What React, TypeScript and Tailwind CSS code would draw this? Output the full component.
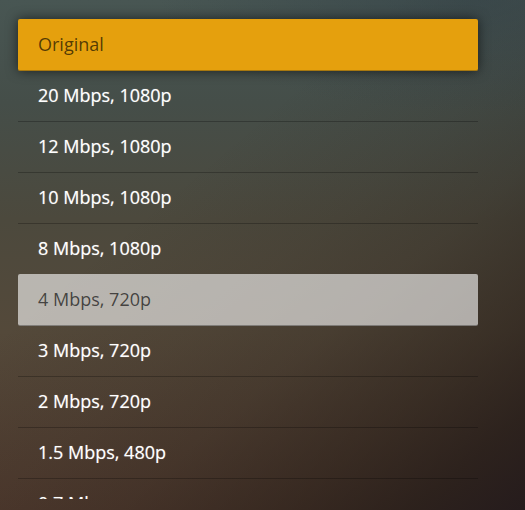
import { useState } from 'react'
import clsx from 'clsx'

const qualities = [
  'Original',
  '20 Mbps, 1080p',
  '12 Mbps, 1080p',
  '10 Mbps, 1080p',
  '8 Mbps, 1080p',
  '4 Mbps, 720p',
  '3 Mbps, 720p',
  '2 Mbps, 720p',
  '1.5 Mbps, 480p',
  '0.7 Mbps',
]

export default function App() {
  const [selected, setSelected] = useState(0)
  const [active, setActive] = useState(5)

  return (
    <div className="flex h-screen flex-col bg-[radial-gradient(ellipse_60%_22%_at_90%_0%,rgba(46,60,68,0.5)_0%,rgba(46,60,68,0)_100%),linear-gradient(140deg,rgba(36,27,22,0)_35%,rgba(36,27,22,0.12)_52%,rgba(36,27,22,0.25)_64%,rgba(36,27,22,0.55)_79%,rgba(36,27,24,0.8)_90%,rgba(34,25,27,0.92)_100%),linear-gradient(to_bottom,#485653_0%,#454e49_20%,#4c493d_43%,#54493a_65%,#4f3a2e_100%)] pb-[11px] font-['Open_Sans','Noto_Sans',sans-serif]">
      <div className="min-h-0 flex-1 overflow-hidden pt-[19px] pr-[47px] pl-[18px]">
        <ul>
          {qualities.map((quality, index) => {
            const isSelected = index === selected
            const isActive = index === active && !isSelected
            const isBeforeActive = index + 1 === active

            return (
              <li key={quality} className="-mt-px first:mt-0">
                <button
                  type="button"
                  onClick={() => setSelected(index)}
                  onMouseEnter={() => setActive(index)}
                  className={clsx(
                    'block h-13 w-full border-b px-5 pb-0.5 text-left text-lg',
                    isSelected && 'rounded-xs border-[#a8780f] bg-[#e5a00d] text-black/65 shadow-[0_0_12px_rgba(0,0,0,0.6)]',
                    isActive && 'rounded-xs border-black/30 bg-white/60 text-black/65',
                    !isSelected && !isActive && 'font-medium text-white [text-shadow:0_0_1px_rgba(255,255,255,0.5)]',
                    !isSelected && !isActive && (isBeforeActive ? 'border-transparent' : 'border-black/25'),
                  )}
                >
                  {quality}
                </button>
              </li>
            )
          })}
        </ul>
      </div>
    </div>
  )
}
